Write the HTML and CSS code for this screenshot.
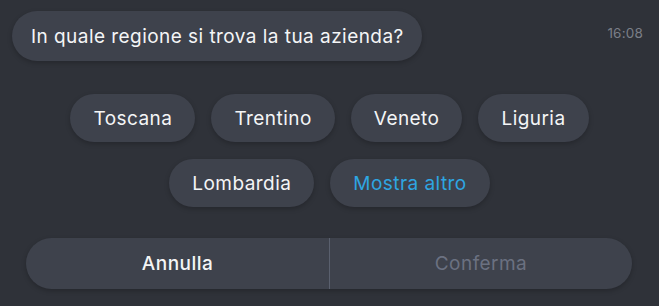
FILE: index.html
```html
<!DOCTYPE html>
<html lang="it">
<head>
<meta charset="utf-8">
<link rel="stylesheet" href="styles.css">
</head>
<body>
  <div class="msg-row">
    <div class="bubble">In quale regione si trova la tua azienda?</div>
    <div class="time">16:08</div>
  </div>
  <div class="choices">
    <button class="pill">Toscana</button>
    <button class="pill">Trentino</button>
    <button class="pill">Veneto</button>
    <button class="pill">Liguria</button>
    <button class="pill">Lombardia</button>
    <button class="pill pill-more">Mostra altro</button>
  </div>
  <div class="actions">
    <button class="action action-cancel">Annulla</button>
    <button class="action action-confirm">Conferma</button>
  </div>
</body>
</html>
```
FILE: styles.css
```css
html, body {
  margin: 0;
  background: #2f3239;
  font-family: Inter, "Open Sans", sans-serif;
  color: #f4f5f6;
}
body {
  width: 659px;
  height: 306px;
  overflow: hidden;
}
.msg-row {
  display: flex;
  justify-content: space-between;
  align-items: flex-start;
  padding: 11px 16px 0 12px;
}
.bubble {
  height: 50px;
  display: flex;
  align-items: center;
  padding: 0 18px 0 19px;
  border-radius: 25px;
  background: #3e424c;
  font-size: 19px;
  letter-spacing: 0.45px;
  box-shadow: 0 2px 5px rgba(0, 0, 0, 0.22);
}
.time {
  margin-top: 14px;
  font-size: 13.5px;
  color: #7b7f88;
  letter-spacing: 0.2px;
}
.choices {
  width: 545px;
  margin: 33px auto 0;
  display: flex;
  flex-wrap: wrap;
  justify-content: center;
  gap: 17px 16px;
}
.pill {
  height: 48px;
  padding: 0 23px;
  border: 0;
  border-radius: 24px;
  background: #3e424c;
  color: #f4f5f6;
  font-family: inherit;
  font-size: 19px;
  letter-spacing: 0.45px;
  box-shadow: 0 2px 5px rgba(0, 0, 0, 0.22);
}
.pill-more {
  color: #2ea6e2;
}
.actions {
  margin: 31px 27px 0 26px;
  height: 51px;
  display: grid;
  grid-template-columns: 1fr 1fr;
  border-radius: 26px;
  background: #3e424c;
  overflow: hidden;
  box-shadow: 0 2px 5px rgba(0, 0, 0, 0.22);
}
.action {
  border: 0;
  background: transparent;
  font-family: inherit;
  font-size: 19px;
  letter-spacing: 0.45px;
}
.action-cancel {
  color: #f4f5f6;
  font-weight: 500;
}
.action-confirm {
  color: #6b7181;
  border-left: 1px solid #5a606e;
}
```
